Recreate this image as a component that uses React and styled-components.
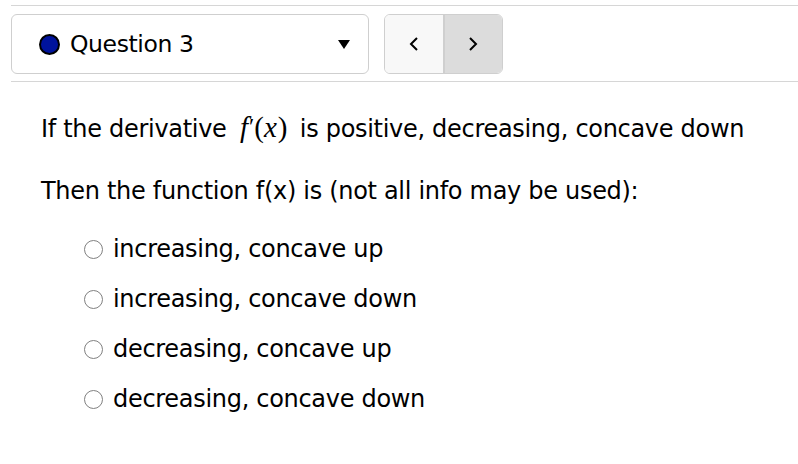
import React from "react";
import styled, { createGlobalStyle } from "styled-components";

const Global = createGlobalStyle`
  html, body { margin: 0; padding: 0; background: #fff; }
  body { font-family: "DejaVu Sans", Verdana, sans-serif; color: #000; }
`;

const Page = styled.div`
  width: 798px;
  height: 464px;
  padding: 5px 0 0 11px;
  box-sizing: border-box;
`;

const Rule = styled.div`
  height: 1px;
  background: #d6d6d6;
`;

const Toolbar = styled.div`
  display: flex;
  align-items: center;
  gap: 15px;
  padding: 8px 0 7px;
`;

const Select = styled.div`
  width: 358px;
  height: 60px;
  box-sizing: border-box;
  border: 1px solid #cfcfcf;
  border-radius: 6px;
  display: flex;
  align-items: center;
  padding: 0 18px 0 27px;
`;

const Dot = styled.span`
  width: 21px;
  height: 21px;
  box-sizing: border-box;
  border-radius: 50%;
  background: #00139c;
  border: 2px solid #000;
  margin-right: 10px;
`;

const SelectLabel = styled.span`
  flex: 1;
  font-size: 23.5px;
  letter-spacing: -0.4px;
`;

const Caret = styled.span`
  width: 0;
  height: 0;
  border-left: 6px solid transparent;
  border-right: 6px solid transparent;
  border-top: 9px solid #000;
`;

const NavGroup = styled.div`
  display: flex;
  width: 119px;
  height: 60px;
  box-sizing: border-box;
  border: 1px solid #cfcfcf;
  border-radius: 6px;
  overflow: hidden;
`;

const NavButton = styled.div`
  flex: 1;
  display: flex;
  align-items: center;
  justify-content: center;
  background: ${(p) => (p.$active ? "#dcdcdc" : "#f8f8f8")};
  & + & { border-left: 2px solid #cfcfcf; }
`;

const Content = styled.div`
  padding: 30px 0 0 30px;
  font-size: 24px;
  letter-spacing: -0.3px;
`;

const Para = styled.p`
  margin: 0 0 34px;
  line-height: 28px;
`;

const MathExpr = styled.span`
  display: inline-block;
  margin: 0 5px 0 6px;
  font-family: "Liberation Serif", "Times New Roman", serif;
  font-size: 29px;
  letter-spacing: 0;
  line-height: 28px;
`;

const MathVar = styled.i`
  font-style: italic;
  padding-right: ${(p) => p.$pad || 0}px;
`;

const Prime = styled.span`
  font-size: 24px;
  vertical-align: 3px;
`;

const Options = styled.div`
  display: flex;
  flex-direction: column;
  gap: 22px;
  padding-left: 43px;
  margin-top: -4px;
`;

const Option = styled.label`
  display: flex;
  align-items: center;
  line-height: 28px;
`;

const Radio = styled.span`
  width: 19px;
  height: 19px;
  box-sizing: border-box;
  border: 1.5px solid #808080;
  border-radius: 50%;
  margin-right: 10px;
  background: #fff;
`;

const Chevron = ({ dir }) => (
  <svg width="14" height="18" viewBox="0 0 14 18">
    <path
      d={dir === "left" ? "M10 3 L4 9 L10 15" : "M4 3 L10 9 L4 15"}
      fill="none"
      stroke="#000"
      strokeWidth="2"
    />
  </svg>
);

const options = [
  "increasing, concave up",
  "increasing, concave down",
  "decreasing, concave up",
  "decreasing, concave down",
];

export default function App() {
  return (
    <Page>
      <Global />
      <Rule />
      <Toolbar>
        <Select>
          <Dot />
          <SelectLabel>Question 3</SelectLabel>
          <Caret />
        </Select>
        <NavGroup>
          <NavButton><Chevron dir="left" /></NavButton>
          <NavButton $active><Chevron dir="right" /></NavButton>
        </NavGroup>
      </Toolbar>
      <Rule />
      <Content>
        <Para>
          If the derivative{" "}
          <MathExpr>
            <MathVar $pad={1}>f</MathVar><Prime>′</Prime>(<MathVar $pad={1}>x</MathVar>)
          </MathExpr>
          {" "}is positive, decreasing, concave down
        </Para>
        <Para>Then the function f(x) is (not all info may be used):</Para>
        <Options>
          {options.map((o) => (
            <Option key={o}>
              <Radio />
              {o}
            </Option>
          ))}
        </Options>
      </Content>
    </Page>
  );
}
